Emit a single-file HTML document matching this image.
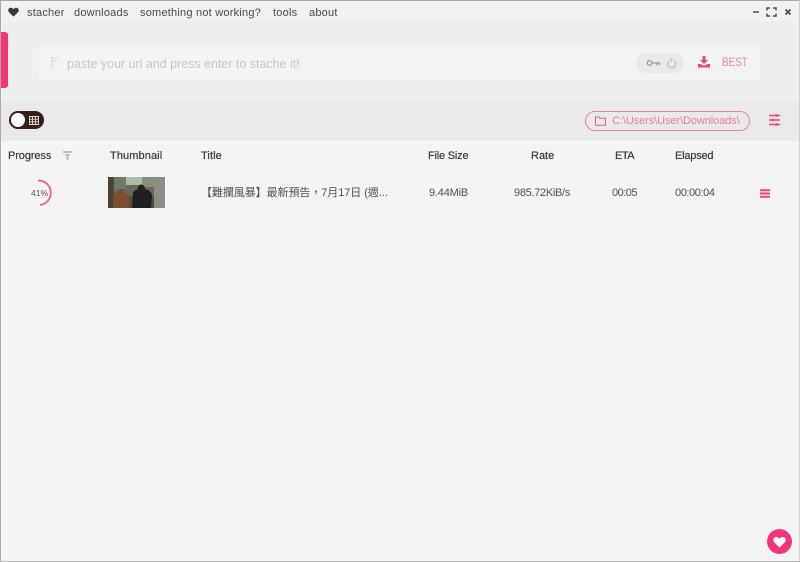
<!DOCTYPE html>
<html><head><meta charset="utf-8"><style>
*{box-sizing:border-box}
html,body{margin:0;padding:0}
body{width:800px;height:562px;position:relative;overflow:hidden;background:#f4f4f4;font-family:"Liberation Sans","Noto Sans CJK TC",sans-serif;color:#444}
#w{position:absolute;left:0;top:0;width:800px;height:562px;filter:blur(.3px)}
.a{position:absolute;white-space:nowrap}
.m{font-size:11px;top:6px;color:#4a4a4a;letter-spacing:.22px;line-height:14px}
.h{font-size:11px;top:149px;color:#3c3c3c;line-height:14px;text-shadow:0 0 .5px #3c3c3c}
.c{font-size:11px;top:186px;color:#505050;line-height:14px;letter-spacing:-.3px}
svg{position:absolute;display:block}
</style></head><body><div id="w">
<div class="a" style="left:0;top:0;width:800px;height:23px;background:#f1f1f1;border-bottom:1px solid #ececec"></div>
<div class="a" style="left:0;top:23px;width:800px;height:78px;background:#eeeeee"></div>
<div class="a" style="left:0;top:101px;width:800px;height:40px;background:#e9e9e9"></div>

<svg style="left:8px;top:7px" width="11" height="10" viewBox="0 0 11 10"><path d="M5.500 9.600 1 5.200C-.4 3.600.2 1 2.600.8c1.300-.1 2.300.6 2.900 1.500C6.100 1.400 7.100.7 8.400.8c2.400.2 3 2.800 1.600 4.400z" fill="#3a3a3a"/></svg>
<div class="a m" style="left:27px">stacher</div>
<div class="a m" style="left:74px">downloads</div>
<div class="a m" style="left:140px">something not working?</div>
<div class="a m" style="left:273px">tools</div>
<div class="a m" style="left:309px">about</div>

<svg style="left:752px;top:6px" width="40" height="12" viewBox="0 0 40 12" fill="none" stroke="#4a4a4a" stroke-width="1.500"><path d="M1 6h6"/><path d="M15 4.500V2h3M21 2h3v2.500M24 7.500V10h-3M18 10h-3V7.500"/><path d="M33.500 3.500l5 5M38.500 3.500l-5 5" stroke-width="1.700"/></svg>

<div class="a" style="left:0;top:32px;width:8px;height:56px;background:#f5357a;border-radius:0 3px 3px 0"></div>

<div class="a" style="left:39px;top:46px;width:721px;height:34px;background:#f3f3f3;border-radius:5px"></div>
<svg style="left:50px;top:57px" width="9" height="12" viewBox="0 0 9 12" fill="none" stroke="#dcdcdc" stroke-width="1.300"><path d="M1 1h7M1 4h5M2 1v10"/></svg>
<div class="a" style="left:67px;top:56px;font-size:12.500px;line-height:16px;color:#c4c4c4;letter-spacing:-.02px">paste your url and press enter to stache it!</div>

<div class="a" style="left:636px;top:54px;width:48px;height:19px;background:#e8e8e8;border-radius:10px"></div>
<svg style="left:646px;top:57px" width="32" height="13" viewBox="0 0 32 13" fill="none" stroke="#9c9c9c" stroke-width="1.300"><circle cx="3.500" cy="6" r="2.300"/><path d="M6 6h8M10.800 6v2.500M13.500 6v2"/><path d="M23.500 3.500a4 4 0 1 0 4.500 0" stroke="#c4c4c4" stroke-width="1.400"/><path d="M25.500 1v4" stroke="#c4c4c4" stroke-width="1.400"/></svg>

<svg style="left:698px;top:56px" width="12" height="12" viewBox="0 0 12 12" fill="#e8457f"><path d="M4.500 0h3v4h2.500L6 8 2 4h2.500z"/><path d="M0 8h2.500L6 10 9.500 8H12v3.500H0z"/></svg>
<div class="a" style="left:722px;top:56px;font-size:11.500px;line-height:14px;color:#ee85a8;transform:scaleX(.86);transform-origin:0 50%">BEST</div>

<div class="a" style="left:9px;top:111px;width:35px;height:18px;background:#33201c;border-radius:9px"></div>
<div class="a" style="left:11px;top:113px;width:14px;height:14px;background:#fff;border-radius:50%"></div>
<svg style="left:29px;top:116px" width="10" height="9" viewBox="0 0 10 9" fill="none" stroke="#e8e0d8" stroke-width=".9"><path d="M.5.500h9v8h-9zM.5 3.200h9M.5 5.800h9M3.500.5v8M6.500.5v8"/></svg>

<div class="a" style="left:585px;top:111px;width:165px;height:20px;border:1px solid #ee7fa5;border-radius:10px"></div>
<svg style="left:595px;top:116px" width="11" height="10" viewBox="0 0 11 10" fill="none" stroke="#e2658f" stroke-width="1"><path d="M.5 1h3.500l1 1.300h5.500v7H.5z"/></svg>
<div class="a" style="left:612px;top:114px;font-size:11px;line-height:14px;color:#e77a9f;letter-spacing:-.08px">C:\Users\User\Downloads\</div>

<svg style="left:768px;top:113px" width="13" height="14" viewBox="0 0 13 14" fill="none" stroke="#e8457f" stroke-width="1.500"><path d="M1 2.500h11M1 7h11M1 11.500h11"/><circle cx="8.500" cy="2.500" r="1.400" fill="#e8457f" stroke="none"/><circle cx="4.500" cy="7" r="1.400" fill="#e8457f" stroke="none"/><circle cx="8.500" cy="11.500" r="1.400" fill="#e8457f" stroke="none"/></svg>

<div class="a h" style="left:8px;letter-spacing:-.1px">Progress</div>
<svg style="left:63px;top:151px" width="9" height="9" viewBox="0 0 9 9" fill="#bdbdbd"><path d="M0 0h9v2H0zM1.500 3h6L5.500 5.500V9h-2V5.500z"/></svg>
<div class="a h" style="left:110px;letter-spacing:.1px">Thumbnail</div>
<div class="a h" style="left:201px;letter-spacing:.1px">Title</div>
<div class="a h" style="left:428px;letter-spacing:-.2px">File Size</div>
<div class="a h" style="left:531px">Rate</div>
<div class="a h" style="left:615px;letter-spacing:-.5px">ETA</div>
<div class="a h" style="left:675px;letter-spacing:-.2px">Elapsed</div>

<svg style="left:26px;top:178px" width="28" height="30" viewBox="0 0 28 30" fill="none"><path d="M12 2.500A12.300 12.300 0 0 1 14 27" stroke="#ee5d8c" stroke-width="1.800"/></svg>
<div class="a" style="left:31px;top:187px;font-size:8.500px;line-height:12px;color:#555">41%</div>

<svg style="left:108px;top:177px" width="57" height="31" viewBox="0 0 57 31"><rect width="57" height="31" fill="#6a6a58"/><rect x="0" y="0" width="6" height="31" fill="#4a4438"/><rect x="6" y="0" width="12" height="12" fill="#6f7a62"/><rect x="18" y="0" width="16" height="8" fill="#a9bda6"/><rect x="34" y="0" width="12" height="10" fill="#85907f"/><rect x="46" y="0" width="11" height="31" fill="#8a8f85"/><rect x="6" y="19" width="40" height="12" fill="#554a3c"/><path d="M5 31V20c0-3 3-5 5-5 0-4 6-4 6 0 3 1 6 3 6 7l-1 9z" fill="#7b4f32"/><path d="M24 31l1-15c0-2 3-3 5-4-1-6 7-6 7 0 4 1 7 3 7 7l-1 12z" fill="#1e1f20"/></svg>

<div class="a c" style="left:201px;letter-spacing:-.07px">【難攔風暴】最新預告，7月17日 (週...</div>
<div class="a c" style="left:429px;letter-spacing:-.2px">9.44MiB</div>
<div class="a c" style="left:514px">985.72KiB/s</div>
<div class="a c" style="left:612px;letter-spacing:-.5px">00:05</div>
<div class="a c" style="left:675px;letter-spacing:-.4px">00:00:04</div>
<svg style="left:760px;top:189px" width="10" height="9" viewBox="0 0 10 9" fill="#e8457f"><path d="M0 .3h10v2H0zM0 3.500h10v2H0zM0 6.700h10v2H0z"/></svg>

<div class="a" style="left:767px;top:529px;width:25px;height:25px;background:#f5357a;border-radius:50%"></div>
<svg style="left:773px;top:536px" width="13" height="12" viewBox="0 0 13 12"><path d="M6.500 11.500 1.200 6.200C-.4 4.300.4 1 3.200 1c1.500 0 2.600.8 3.300 1.800C7.200 1.800 8.300 1 9.800 1c2.800 0 3.600 3.300 2 5.200z" fill="#fff"/></svg>

<div class="a" style="left:0;top:0;width:800px;height:1px;background:#a8a8a8"></div>
<div class="a" style="left:0;top:0;width:1px;height:562px;background:#a8a8a8"></div>
<div class="a" style="left:799px;top:0;width:1px;height:562px;background:#d0d0d0"></div>
<div class="a" style="left:0;top:561px;width:800px;height:1px;background:#b8b8b8"></div>
</div></body></html>
